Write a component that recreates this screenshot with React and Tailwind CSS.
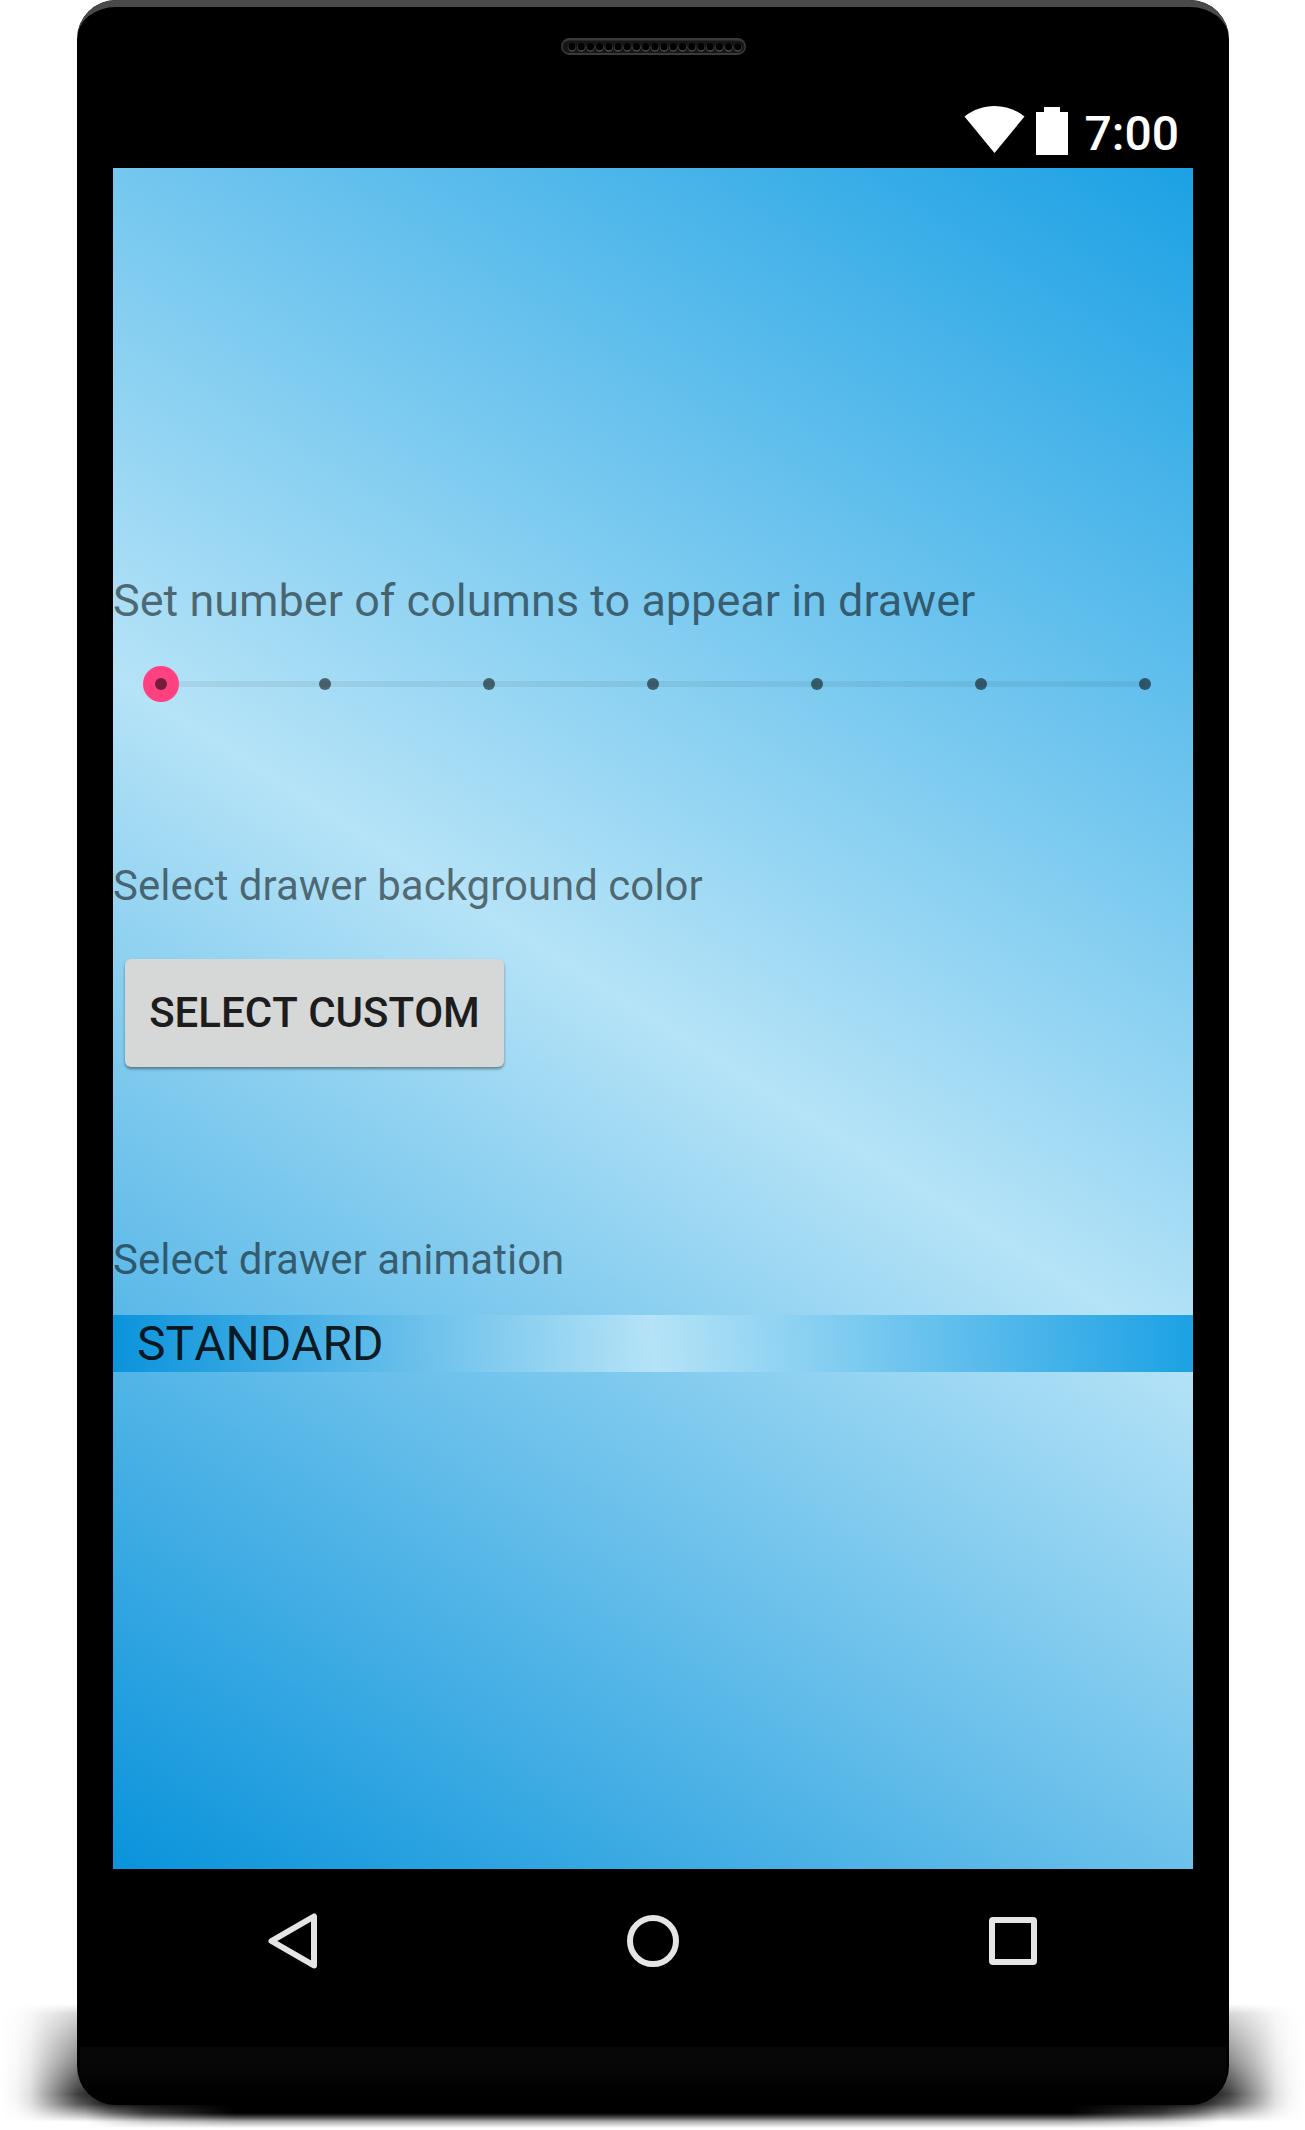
const slots = Array.from({ length: 19 }, (_, i) => i);
const ticks = Array.from({ length: 7 }, (_, i) => i);

function Speaker() {
  return (
    <svg className="h-[17px] w-[185px]" viewBox="0 0 185 17" fill="none">
      <rect x="0" y="0" width="185" height="17" rx="8.5" fill="#3a3a3a" />
      <rect x="1.5" y="2.5" width="182" height="12.5" rx="6.2" fill="#161616" />
      {slots.map((i) => (
        <g key={i}>
          <circle cx={11 + i * 9.21} cy="9.5" r="4.2" fill="#484848" />
          <circle cx={11 + i * 9.21} cy="8.7" r="3.6" fill="#000" />
        </g>
      ))}
    </svg>
  );
}

function StatusBar() {
  return (
    <div className="flex h-[72px] items-start justify-end pr-[14px] text-white">
      <svg className="mt-[10px] h-[48px] w-[61px]" viewBox="0 0 61 48" fill="#fff">
        <path d="M0.5 10.5C18-3.5 43-3.5 60.500 10.500L30.500 47z" />
      </svg>
      <svg className="mt-[11px] ml-[11px] h-[48px] w-[32px]" viewBox="0 0 32 48" fill="#fff">
        <path d="M0 5h8V0h16v5h8v43H0z" />
      </svg>
      <span className="mt-[10px] ml-[17px] text-[48px] leading-[56px] font-medium">7:00</span>
    </div>
  );
}

function ColumnSlider() {
  return (
    <div className="relative mt-[39px] ml-[30px] flex h-[36px] w-[1020px] items-center justify-between px-[12px]">
      <div className="absolute left-[18px] h-[6px] w-[984px] bg-black/6" />
      <div className="absolute left-0 size-[36px] rounded-full bg-[#ff4081]" />
      {ticks.map((i) => (
        <span key={i} className="relative size-[12px] rounded-full bg-black/54" />
      ))}
    </div>
  );
}

function NavBar() {
  return (
    <div className="flex justify-around pt-[42px]">
      <svg className="h-[60px] w-[60px]" viewBox="0 0 60 60" fill="none" stroke="#e5e5e5" strokeWidth="6" strokeLinejoin="round">
        <path d="M51 5.500V54.500L8.500 30z" />
      </svg>
      <svg className="h-[60px] w-[60px]" viewBox="0 0 60 60" fill="none" stroke="#e5e5e5" strokeWidth="6">
        <circle cx="30" cy="30" r="23" />
      </svg>
      <svg className="h-[60px] w-[60px]" viewBox="0 0 60 60" fill="none">
        <rect x="6" y="6" width="48" height="48" rx="4" fill="#e5e5e5" />
        <path d="M12 12h36v36H12z" fill="#000" />
      </svg>
    </div>
  );
}

function GroundShadow() {
  return (
    <>
      <div className="absolute top-[2004px] left-0 h-[122px] w-[1305px] bg-[linear-gradient(to_right,transparent,rgba(0,0,0,0.03)_15px,rgba(0,0,0,0.12)_30px,rgba(0,0,0,0.42)_52px,rgba(0,0,0,0.75)_77px,#000_110px,#000_1196px,rgba(0,0,0,0.75)_1229px,rgba(0,0,0,0.42)_1254px,rgba(0,0,0,0.12)_1276px,rgba(0,0,0,0.03)_1291px,transparent)] [mask-image:linear-gradient(to_bottom,transparent,rgba(0,0,0,0.22)_10px,rgba(0,0,0,0.6)_56px,#000_90px,rgba(0,0,0,0.85)_100px,transparent_118px)]" />
      <div className="absolute top-[2100px] left-[85px] h-[28px] w-[1136px] bg-[linear-gradient(to_right,transparent,rgba(0,0,0,0.6)_60px,#000_150px,#000_986px,rgba(0,0,0,0.6)_1076px,transparent)] [mask-image:linear-gradient(to_bottom,#000_13px,rgba(0,0,0,0.4)_20px,transparent_28px)]" />
    </>
  );
}

export default function App() {
  return (
    <div className="relative h-[2130px] w-[1305px] overflow-hidden bg-white pl-[77px] font-['Roboto',sans-serif]">
      <GroundShadow />
      <div className="relative flex h-[2105px] w-[1152px] flex-col overflow-hidden rounded-[39px] bg-black px-[36px]">
        <div className="absolute inset-x-0 top-0 h-[60px] rounded-t-[39px] border-t-[7px] border-[#4a4a4a]" />
        <div className="absolute inset-x-[3px] bottom-0 h-[58px] bg-gradient-to-b from-[#070707] via-[#060606] to-black" />
        <div className="flex h-[96px] justify-center pt-[38px]">
          <Speaker />
        </div>
        <StatusBar />
        <main className="h-[1701px] bg-[linear-gradient(32.41deg,#0a93db,#b5e3f7_50%,#1ca1e4)] pt-[406px]">
          <p className="text-[45px] leading-[53px] whitespace-nowrap text-black/54">
            Set number of columns to appear in drawer
          </p>
          <ColumnSlider />
          <p className="mt-[159px] text-[42px] leading-[49px] text-black/54">Select drawer background color</p>
          <button className="mt-[49px] ml-[12px] block h-[108px] w-[379px] rounded-[6px] bg-[#d6d7d7] pb-[2px] text-[42px] font-medium text-[#1d1d1d] shadow-[0_2px_3px_rgba(0,0,0,0.4)] [font-kerning:none]">
            SELECT CUSTOM
          </button>
          <p className="mt-[168px] text-[42px] leading-[49px] text-black/54">Select drawer animation</p>
          <div className="mt-[31px] h-[57px] bg-[linear-gradient(87deg,#0a93db,#b5e3f7_50%,#1ca1e4)] pl-[24px] text-[48px] leading-[57px] text-black/87 [font-kerning:none]">
            STANDARD
          </div>
        </main>
        <NavBar />
      </div>
    </div>
  );
}
